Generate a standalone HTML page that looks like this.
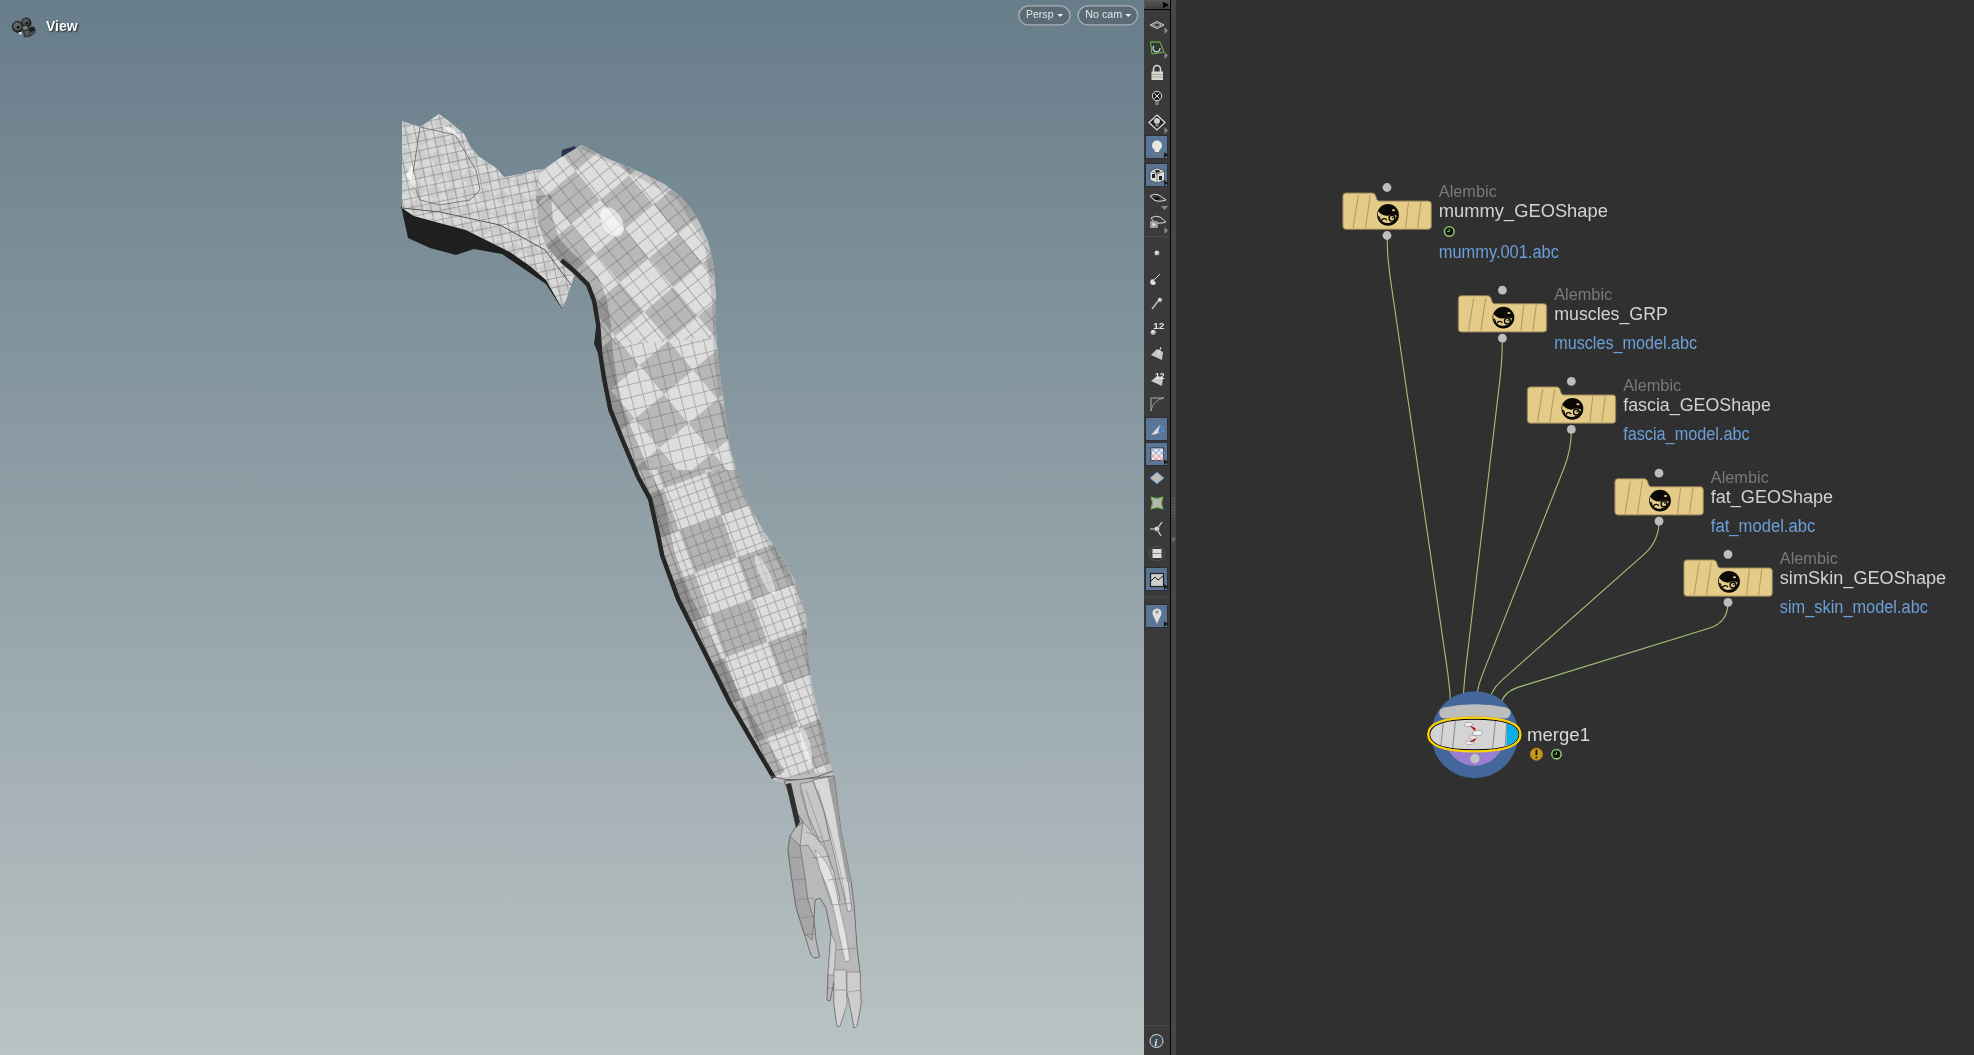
<!DOCTYPE html>
<html><head><meta charset="utf-8">
<style>
html,body{margin:0;padding:0;width:1974px;height:1055px;overflow:hidden;background:#2f2f2f;font-family:"Liberation Sans",sans-serif}
#vp{position:absolute;left:0;top:0;width:1144px;height:1055px;background:linear-gradient(to bottom,rgb(103,125,138) 0%,rgb(186,195,196) 100%);overflow:hidden}
#tb{position:absolute;left:1144px;top:0;width:26px;height:1055px;background:#3a3a3a}
#sep{position:absolute;left:1170px;top:0;width:1px;height:1055px;background:#000}
#strip{position:absolute;left:1171px;top:0;width:5px;height:1055px;background:#474747}
#ng{position:absolute;left:1176px;top:0;width:798px;height:1055px;background:#303030}
svg{position:absolute;left:0;top:0;overflow:visible;will-change:transform}
.view{will-change:transform;position:absolute;left:46px;top:18px;font-size:14px;line-height:16px;font-weight:bold;color:#fafafa;text-shadow:1px 1px 1.5px rgba(0,0,0,0.75)}
.pill{position:absolute;top:5px;height:19px;border:1px solid #a9b3b8;border-radius:10px;background:#5a6f7b;color:#e8e8e8;font-size:11px;line-height:19px;box-sizing:border-box}
</style></head><body>
<div id="vp">
  <svg id="arm" width="1144" height="1055" viewBox="0 0 1144 1055">
    <defs>
      <pattern id="gridA" width="12" height="12.5" patternUnits="userSpaceOnUse" patternTransform="rotate(-14)">
        <path d="M0 0.4H12M0.4 0V12.5" stroke="#505050" stroke-width="0.7" fill="none"/>
      </pattern>
      <pattern id="gridB" width="13" height="13" patternUnits="userSpaceOnUse" patternTransform="rotate(-38)">
        <path d="M0 0.4H13M0.4 0V13" stroke="#505050" stroke-width="0.7" fill="none"/>
      </pattern>
      <pattern id="gridF" width="9" height="10" patternUnits="userSpaceOnUse" patternTransform="rotate(-20)">
        <path d="M0 0.4H9M0.4 0V10" stroke="#505050" stroke-width="0.7" fill="none"/>
      </pattern>
      <pattern id="gridS" width="9" height="9" patternUnits="userSpaceOnUse" patternTransform="rotate(-12)">
        <path d="M0 0.4H9M0.4 0V9" stroke="#5a5a5a" stroke-width="0.6" fill="none"/>
      </pattern>
      <pattern id="chkA" width="90" height="90" patternUnits="userSpaceOnUse" patternTransform="translate(10 8) rotate(-20)">
        <rect width="90" height="90" fill="#dcdcdc"/>
        <rect width="45" height="45" fill="#b3b3b3"/>
        <rect x="45" y="45" width="45" height="45" fill="#b3b3b3"/>
      </pattern>
      <pattern id="stripes" width="76" height="76" patternUnits="userSpaceOnUse" patternTransform="translate(600 200) rotate(-40)">
        <rect width="76" height="76" fill="#dedede"/>
        <rect width="38" height="38" fill="#b8b8b8"/>
        <rect x="38" y="38" width="38" height="38" fill="#b8b8b8"/>
      </pattern>
      <pattern id="chkS" width="24" height="24" patternUnits="userSpaceOnUse" patternTransform="rotate(-40)">
        <rect width="24" height="24" fill="#d8d8d8"/>
        <rect width="12" height="12" fill="#b8b8b8"/>
        <rect x="12" y="12" width="12" height="12" fill="#b8b8b8"/>
      </pattern>
      <clipPath id="armclip"><path id="armpath" d="M540 172 L560 158 L582 145 L606 158 L626 166 L644 174 L664 184 L680 196 L692 210 L700 224 L708 242 L712 258 L714 270 L716 300 L716 330 L718 360 L722 390 L726 420 L730 450 L740 480 L748 504 L764 532 L784 560 L798 588 L806 616 L808 648 L812 688 L820 720 L828 752 L832 772 L833 780 L812 782 L786 784 L772 779 L756 752 L728 704 L700 648 L676 600 L660 556 L656 536 L648 500 L636 478 L620 440 L608 410 L602 380 L598 354 L594 344 L596 326 L592 302 L586 286 L574 274 L560 262 L546 246 L538 222 L536 196 Z"/></clipPath>
      <clipPath id="shclip"><path d="M402 121 L420 127 L439 114 L450 122 L464 134 L470 146 L478 156 L484 160 L496 168 L504 177 L522 174 L534 170 L548 169 L560 162 L572 176 L578 200 L580 230 L576 270 L566 300 L562 308 L546 280 L530 266 L510 252 L486 240 L466 230 L436 222 L414 216 L402 208 Z"/></clipPath>
      <linearGradient id="hl" x1="0" y1="0" x2="1" y2="0">
        <stop offset="0" stop-color="#fff" stop-opacity="0"/>
        <stop offset="0.5" stop-color="#fff" stop-opacity="0.55"/>
        <stop offset="1" stop-color="#fff" stop-opacity="0"/>
      </linearGradient>
    </defs>
    <!-- shoulder shadow -->
    <path d="M401 206 L408 238 L430 248 L456 255 L474 249 L502 254 L546 284 L562 309 L570 280 L540 244 Z" fill="#1f1f1f"/>
    <path d="M562 150 L575 146 L580 160 L560 168 Z" fill="#2a3150"/>
    <!-- shoulder piece -->
    <g clip-path="url(#shclip)">
      <rect x="395" y="110" width="190" height="200" fill="#dadada"/>
      <rect x="395" y="110" width="190" height="200" fill="url(#chkS)" opacity="0.4"/>
      <rect x="395" y="110" width="190" height="200" fill="url(#gridS)" opacity="0.75"/>
      <path d="M420 127 L455 135 L476 170 L480 190 L470 200 L440 205 L420 200 L412 180 Z" fill="none" stroke="#666" stroke-width="0.8"/>
      <path d="M402 208 L440 212 L500 225 L545 250 L575 290" fill="none" stroke="#555" stroke-width="1"/>
      <path d="M406 175 L412 165 L416 190 Z" fill="#fff" opacity="0.7"/>
      <path d="M440 125 L452 128 L462 140 Z" fill="#fff" opacity="0.6"/>
    </g>
    <!-- collar flap edge -->
    <path d="M538 180 L542 224 L556 244 L574 264 L582 280" fill="none" stroke="#777" stroke-width="1"/>
    <!-- upper arm + sleeve -->
    <g clip-path="url(#armclip)">
      <rect x="530" y="140" width="310" height="650" fill="#d6d6d6"/>
      <rect x="530" y="140" width="310" height="330" fill="url(#stripes)"/>
      <rect x="530" y="470" width="310" height="320" fill="url(#chkA)"/>
      <path d="M530 140 H840 V330 L530 350 Z" fill="url(#gridB)" opacity="0.55"/>
      <path d="M530 350 L840 330 V470 H530 Z" fill="url(#gridA)" opacity="0.55"/>
      <rect x="530" y="470" width="310" height="320" fill="url(#gridF)" opacity="0.55"/>
      <!-- highlights -->
      <ellipse cx="612" cy="222" rx="10" ry="16" fill="#fff" opacity="0.6" transform="rotate(-30 612 222)"/>
      <ellipse cx="765" cy="575" rx="5" ry="22" fill="#fff" opacity="0.45" transform="rotate(-25 765 575)"/>
      <ellipse cx="806" cy="745" rx="4" ry="18" fill="#fff" opacity="0.5" transform="rotate(-15 806 745)"/>
      <!-- left dark rim -->
      <path d="M536 196 L538 222 L546 246 L560 262 L574 274 L586 286 L592 302 L596 326 L598 354 L602 380 L608 410 L620 440 L636 478 L648 500 L656 536 L660 556 L676 600 L700 648 L728 704 L756 752 L772 779" fill="none" stroke="#000" stroke-opacity="0.2" stroke-width="30" stroke-linejoin="round"/>
      <path d="M560 262 L574 274 L586 286 L592 302 L596 326 L598 354 L602 380 L608 410 L620 440 L636 478 L648 500 L656 536 L660 556 L676 600 L700 648 L728 704 L756 752 L772 779" fill="none" stroke="#262626" stroke-width="9" stroke-linejoin="round"/>
      <!-- right edge slight shade -->
      <path d="M582 145 L626 166 L680 196 L708 242 L716 300 L718 360 L726 420 L740 480 L764 532 L798 588 L808 648 L820 720 L832 772" fill="none" stroke="#000" stroke-opacity="0.12" stroke-width="8"/>
      <!-- sleeve bottom band -->
      <path d="M772 779 L833 771 L834 790 L772 795 Z" fill="#bdbdbd"/>
    </g>
    <path d="M770 776 Q800 786 833 771" fill="none" stroke="#666" stroke-width="1"/>
    <!-- hand -->
    <g stroke-linejoin="round">
      <path d="M784 781 L797 813 L803 822 L795 828 L790 836 L788 850 L790 866 L792 880 L796 907 L804 933 L811 955 L814 958 L819.5 957 L816 940 L814 920 L815 900 L820 898 L826 908 L831 933 L828 975 L827 1000 L830 1001 L834 982 L834 1004 L837 1026 L840 1026 L846 1004 L847 990 L851 1011 L854 1028 L857 1026 L861 1004 L860 972 L857 947 L854 904 L851 881 L846 856 L841 832 L834 776 Z" fill="#b9b9b9" stroke="#5a5a5a" stroke-width="0.8"/>
      <path d="M791 783 L800 822 L796 828 L786 784 Z" fill="#2e2e2e"/>
      <path d="M813 780 L828 777 L836 815 L842 850 L848 880 L852 910 L848 912 L840 880 L832 845 L824 812 Z" fill="#d8d8d8" stroke="#666" stroke-width="0.6"/>
      <path d="M828 778 L834 777 L841 832 L846 856 L851 881 L847 882 L841 850 L835 815 Z" fill="#9e9e9e"/>
      <path d="M800 784 L813 781 L824 812 L830 840 L820 842 L808 815 Z" fill="#c6c6c6" stroke="#666" stroke-width="0.6"/>
      <path d="M803 822 L815 836 L826 850 L834 872 L840 900 L832 905 L825 885 L818 862 L808 845 L800 846 Z" fill="#c9c9c9" stroke="#666" stroke-width="0.6"/>
      <path d="M790 836 L800 846 L804 870 L808 900 L814 920 L812 940 L804 933 L796 907 L792 880 L788 850 Z" fill="#a6a6a6" stroke="#5a5a5a" stroke-width="0.6"/>
      <path d="M815 850 Q832 862 838 900 L846 935 L850 960 L845 962 L838 930 Q832 895 820 870 Z" fill="#e2e2e2" stroke="#777" stroke-width="0.5"/>
      <path d="M831 933 L836 944 L834 975 L828 975 Z" fill="#cfcfcf" stroke="#666" stroke-width="0.5"/>
      <path d="M834 970 L846 970 L847 1004 L840 1026 L837 1026 L834 1004 Z" fill="#d2d2d2" stroke="#666" stroke-width="0.5"/>
      <path d="M847 972 L860 972 L861 1004 L857 1026 L854 1028 L851 1011 L847 992 Z" fill="#cdcdcd" stroke="#666" stroke-width="0.5"/>
      <path d="M796 900 L814 898 M799 918 L815 916 M804 935 L816 934 M790 858 L802 857 M792 880 L806 879 M806 832 L822 838 M812 858 L830 856 M828 880 L846 878 M833 905 L852 903 M836 950 L857 948 M834 990 L846 990 M848 992 L861 990 M828 988 L834 988" fill="none" stroke="#777" stroke-width="0.5"/>
      <path d="M800 790 L812 830 M806 790 L820 830 L832 870 M818 790 L830 830 L840 870 L846 900" fill="none" stroke="#7a7a7a" stroke-width="0.5"/>
    </g>
  </svg>
  <svg width="40" height="40" style="left:0px;top:0px" viewBox="0 0 40 40">
    <defs><radialGradient id="reel" cx="0.4" cy="0.35" r="0.7"><stop offset="0" stop-color="#6a6a6a"/><stop offset="1" stop-color="#1e1e1e"/></radialGradient></defs>
    <g transform="translate(0.8 0.8)" opacity="0.35"><circle cx="17.6" cy="26.7" r="5.6" fill="#000"/><circle cx="26.1" cy="22.5" r="4.9" fill="#000"/><path d="M21 27 L30 25 L35 28 L35 32 L30 36 L23 36 Z" fill="#000"/></g>
    <circle cx="17.6" cy="26.7" r="5.4" fill="url(#reel)" stroke="#151515" stroke-width="0.8"/>
    <circle cx="17.6" cy="26.7" r="3" fill="none" stroke="#707a80" stroke-width="0.8"/>
    <circle cx="18.2" cy="27.1" r="1.2" fill="#0c0c0c"/>
    <circle cx="26.1" cy="22.5" r="4.6" fill="url(#reel)" stroke="#151515" stroke-width="0.8"/>
    <circle cx="26.6" cy="22.9" r="1.1" fill="#0c0c0c"/>
    <path d="M22 26.5 L27 25.3 L28.3 29.5 L23.2 30.8 Z" fill="#7a7a7a" stroke="#222" stroke-width="0.6"/>
    <path d="M23.5 31 L29.5 29.5 L30.5 35.5 L25 37 Z" fill="#555" stroke="#1a1a1a" stroke-width="0.7"/>
    <path d="M29 28 L34 26.5 L35 31 L30.5 32 Z" fill="#1c1c1c"/>
    <rect x="19" y="32" width="2.5" height="2.5" fill="#ddd"/>
  </svg>
  <div class="view">View</div>
  <svg width="130" height="30" viewBox="1010 0 130 30" style="left:1010px;top:0">
    <rect x="1018.9" y="5.9" width="51" height="19" rx="9.5" fill="#5a6b75" stroke="#a9b1b5" stroke-width="1.3"/>
    <rect x="1078.1" y="5.9" width="59.5" height="19" rx="9.5" fill="#5a6b75" stroke="#a9b1b5" stroke-width="1.3"/>
    <text x="1026" y="18.2" font-size="11" fill="#e6e6e6" textLength="27.5" lengthAdjust="spacingAndGlyphs">Persp</text>
    <text x="1085.2" y="18.2" font-size="11" fill="#e6e6e6" textLength="37" lengthAdjust="spacingAndGlyphs">No cam</text>
    <path d="M1057.2 14 H1063.2 L1060.2 17 Z" fill="#eee"/>
    <path d="M1125.3 14 H1131.3 L1128.3 17 Z" fill="#eee"/>
  </svg>
</div>
<div id="tb"></div>
<div id="sep"></div>
<div id="strip"></div>
<svg id="tbsvg" width="40" height="1055" viewBox="1144 0 40 1055" style="left:1144px;top:0">
  <defs>
    <linearGradient id="btn" x1="0" y1="0" x2="0" y2="1"><stop offset="0" stop-color="#545454"/><stop offset="1" stop-color="#3c3c3c"/></linearGradient>
    <radialGradient id="ball" cx="0.35" cy="0.35" r="0.7"><stop offset="0" stop-color="#f4f4f4"/><stop offset="1" stop-color="#9a9a9a"/></radialGradient>
  </defs>
  <!-- top button -->
  <rect x="1144.5" y="0.5" width="25" height="9" fill="url(#btn)" stroke="#5a5a5a" stroke-width="1"/>
  <rect x="1144" y="9" width="26" height="1" fill="#050505"/>
  <path d="M1163 2 L1169 5 L1163 8 Z" fill="#000"/>
  <g fill="none" stroke="#d8d8d8" stroke-width="1">
    <!-- 1 layers -->
    <path d="M1150 25 L1157 21.5 L1164 25 L1157 28.5 Z"/>
    <path d="M1152.5 25 L1157 23 L1161.5 25 L1157 27 Z" stroke="#9aa"/>
  </g>
  <g fill="#8a8a8a">
    <path d="M1164.5 27 L1168 30.5 L1164.5 34 Z"/>
    <path d="M1164.5 52 L1168 55.5 L1164.5 59 Z"/>
    <path d="M1164.5 127 L1168 130.5 L1164.5 134 Z"/>
    <path d="M1164.5 227 L1168 230.5 L1164.5 234 Z"/>
    <path d="M1161 206 L1168 206 L1164.5 210 Z"/>
  </g>
  <!-- 2 green quad -->
  <path d="M1150.5 42 L1160 42 L1164 52 L1152 54 Z" fill="#2e3a35" stroke="#7cc04a" stroke-width="1"/>
  <path d="M1154 46 A3.5 3.5 0 1 0 1160 48" fill="none" stroke="#ddd" stroke-width="1.2"/>
  <!-- 3 lock -->
  <path d="M1153.5 72 V69 A3.5 3.5 0 0 1 1160.5 69 V72" fill="none" stroke="#d8d8d0" stroke-width="1.6"/>
  <rect x="1151.5" y="71.5" width="11.5" height="8.5" fill="#d9d9d0"/>
  <path d="M1151.5 74.5 H1163 M1151.5 77 H1163" stroke="#9a9a90" stroke-width="0.8"/>
  <!-- 4 bulb x -->
  <circle cx="1157" cy="96" r="4.7" fill="#222" stroke="#ddd" stroke-width="1"/>
  <path d="M1154.5 93.5 L1159.5 98.5 M1159.5 93.5 L1154.5 98.5" stroke="#ddd" stroke-width="1"/>
  <path d="M1155 101 H1159 V105 H1155 Z" fill="#777"/>
  <!-- 5 diamond bulb -->
  <path d="M1157 115 L1165 122.5 L1157 130 L1149 122.5 Z" fill="#222" stroke="#ddd" stroke-width="1.2"/>
  <circle cx="1157" cy="121" r="3" fill="#ccc"/>
  <rect x="1155.5" y="123.5" width="3" height="3" fill="#888"/>
  <!-- highlight boxes -->
  <g fill="#5b7594" stroke="#2c2f33" stroke-width="1">
    <rect x="1145.5" y="135.5" width="22" height="23"/>
    <rect x="1145.5" y="163.5" width="22" height="23"/>
    <rect x="1145.5" y="417.5" width="22" height="23"/>
    <rect x="1145.5" y="442.5" width="22" height="23"/>
    <rect x="1145.5" y="567.5" width="22" height="23"/>
    <rect x="1145.5" y="604.5" width="22" height="23"/>
  </g>
  <g fill="#1a1a1a">
    <path d="M1164 152 L1168 155 L1164 158 Z"/>
    <path d="M1164 180 L1168 183 L1164 186 Z"/>
    <path d="M1164 459 L1168 462 L1164 465 Z"/>
    <path d="M1164 584 L1168 587 L1164 590 Z"/>
    <path d="M1164 621 L1168 624 L1164 627 Z"/>
  </g>
  <!-- bulb -->
  <circle cx="1157" cy="145.5" r="5" fill="#e8e8e0"/>
  <path d="M1154 148 L1160 148 L1159 152 L1155 152 Z" fill="#e8e8e0"/>
  <circle cx="1157" cy="154" r="2" fill="#777"/>
  <!-- cube -->
  <path d="M1150 171 L1157 168 L1164.5 171 L1164.5 180 L1157 183 L1150 180 Z" fill="#ddd" stroke="#333" stroke-width="0.6"/>
  <path d="M1150 171 L1157 174 L1164.5 171 M1157 174 V183" stroke="#333" stroke-width="0.6" fill="none"/>
  <rect x="1152" y="174" width="3" height="4" fill="#222"/>
  <rect x="1159" y="176" width="3" height="4" fill="#222"/>
  <path d="M1155 170 L1159 170 L1160 172 L1156 173 Z" fill="#222"/>
  <!-- glasses -->
  <path d="M1150 196 Q1154 193 1159 195 Q1163 198 1166 200 L1162 201 Q1158 202 1154 200 Z" fill="none" stroke="#ddd" stroke-width="1"/>
  <ellipse cx="1157" cy="198.5" rx="2.5" ry="1.5" fill="#111"/>
  <path d="M1151 218 Q1155 215 1160 217 Q1164 220 1166 222 L1162 223 Q1158 224 1154 222 Z" fill="none" stroke="#ddd" stroke-width="1"/>
  <rect x="1150" y="221" width="8" height="7" rx="1" fill="#999"/>
  <path d="M1152.5 222 L1156 224.5 L1152.5 227 Z" fill="#ddd"/>
  <rect x="1144" y="236" width="26" height="1" fill="#4a4a4a"/>
  <!-- dot -->
  <circle cx="1157" cy="253" r="2.5" fill="url(#ball)"/>
  <!-- brush -->
  <path d="M1160 274 L1154 280" stroke="#ccc" stroke-width="1"/>
  <path d="M1153 279 A3 3 0 1 0 1156 283 Z" fill="#ddd"/>
  <!-- pin -->
  <path d="M1152 309 L1159 300" stroke="#bbb" stroke-width="1.5"/>
  <circle cx="1160" cy="300" r="2.2" fill="url(#ball)"/>
  <!-- 12 dot -->
  <circle cx="1153.3" cy="332.3" r="2.6" fill="url(#ball)"/>
  <text x="1153.2" y="329.4" font-family="Liberation Sans" font-size="9.5" font-weight="bold" fill="#e4e4e4" textLength="11" lengthAdjust="spacingAndGlyphs">12</text>
  <!-- plane stick -->
  <path d="M1151 355 L1157 349 L1163 352 L1162 360 Z" fill="#c8c8c8"/>
  <path d="M1158 355 L1161 347" stroke="#eee" stroke-width="1"/>
  <!-- plane 12 -->
  <path d="M1151 381 L1157 376 L1163 377 L1162 386 Z" fill="#c8c8c8"/>
  <text x="1155" y="378.8" font-family="Liberation Sans" font-size="9.5" font-weight="bold" fill="#e8e8e8" textLength="9.5" lengthAdjust="spacingAndGlyphs">12</text>
  <!-- curve corner -->
  <path d="M1151 411 V398 H1164" fill="none" stroke="#ccc" stroke-width="0.8"/>
  <path d="M1151 411 Q1153 400 1164 398" fill="none" stroke="#aaa" stroke-width="0.8"/>
  <!-- polygon -->
  <path d="M1151 435 L1160 425 L1164 431 L1156 434 Z" fill="#ddd"/>
  <path d="M1158 433 L1160 425 L1164 431 Z" fill="#3d7ac8"/>
  <!-- checker -->
  <rect x="1151" y="448" width="12.5" height="12.5" fill="#eee" stroke="#222" stroke-width="0.8"/>
  <g fill="#9ab8e0"><rect x="1151.5" y="448.5" width="3" height="3"/><rect x="1157.5" y="448.5" width="3" height="3"/><rect x="1154.5" y="451.5" width="3" height="3"/><rect x="1160.5" y="451.5" width="3" height="3"/></g>
  <g fill="#e4a8b0"><rect x="1151.5" y="454.5" width="3" height="3"/><rect x="1157.5" y="454.5" width="3" height="3"/><rect x="1154.5" y="457.5" width="3" height="3"/><rect x="1160.5" y="457.5" width="3" height="3"/></g>
  <!-- diamond blue -->
  <path d="M1157 472 L1164 478 L1157 484 L1150 478 Z" fill="#bdbdb0" stroke="#4a88d8" stroke-width="1"/>
  <!-- green x -->
  <path d="M1151 497 Q1157 500 1163 497 Q1160 503 1163 509 Q1157 506 1151 509 Q1154 503 1151 497 Z" fill="#b5b5b5" stroke="#5cbf3a" stroke-width="1"/>
  <!-- triad -->
  <path d="M1157 529 L1162 522 M1157 529 L1150 529 M1157 529 L1161 536" stroke="#ddd" stroke-width="1.2"/>
  <circle cx="1157" cy="529" r="2.5" fill="url(#ball)"/>
  <!-- circle lines -->
  <circle cx="1157" cy="553.5" r="7.5" fill="none" stroke="#555" stroke-width="1"/>
  <rect x="1152.5" y="549" width="9" height="9" fill="#ddd"/>
  <path d="M1152.5 553.5 H1161.5" stroke="#888" stroke-width="1"/>
  <!-- landscape -->
  <rect x="1150.5" y="573.5" width="13" height="13" fill="#ccc" stroke="#222" stroke-width="1.2"/>
  <path d="M1151 581 L1155 577 L1158 580 L1163 576" fill="none" stroke="#222" stroke-width="1"/>
  <rect x="1144" y="596.5" width="26" height="1" fill="#4a4a4a"/>
  <!-- pin map -->
  <path d="M1157 624 L1153 615 A4.5 4.5 0 1 1 1161 615 Z" fill="#e0e0e0"/>
  <circle cx="1157" cy="612" r="1.8" fill="#999"/>
  <!-- bottom -->
  <rect x="1144" y="1025" width="26" height="1" fill="#4a4a4a"/>
  <circle cx="1156.5" cy="1041" r="6.5" fill="#3d4a52" stroke="#ddd" stroke-width="1"/>
  <text x="1154.5" y="1045.5" font-family="Liberation Serif" font-style="italic" font-weight="bold" font-size="10" fill="#eee">i</text>
  <!-- strip grip -->
  <g fill="#6a6a6a">
    <rect x="1172" y="498" width="1" height="1"/><rect x="1174" y="498" width="1" height="1"/>
    <rect x="1172" y="501" width="1" height="1"/><rect x="1174" y="501" width="1" height="1"/>
    <rect x="1172" y="504" width="1" height="1"/><rect x="1174" y="504" width="1" height="1"/>
    <rect x="1172" y="507" width="1" height="1"/><rect x="1174" y="507" width="1" height="1"/>
    <rect x="1172" y="510" width="1" height="1"/><rect x="1174" y="510" width="1" height="1"/>
    <rect x="1172" y="513" width="1" height="1"/><rect x="1174" y="513" width="1" height="1"/>
    <rect x="1172" y="516" width="1" height="1"/><rect x="1174" y="516" width="1" height="1"/>
  </g>
  <path d="M1172.5 537 L1175.5 539.5 L1172.5 542 Z" fill="#777"/>
</svg>
<div id="ng">
  <svg id="graph" width="798" height="1055" viewBox="1176 0 798 1055" style="left:0;top:0">
<path d="M1387.0 235.5 Q1387.0 255.5 1389.9 275.3 L1447.8 673.2 Q1450.7 693.0 1450.7 713.0" fill="none" stroke="#a3c278" stroke-width="1.1"/>
<path d="M1502.4 338.2 Q1502.4 358.2 1500.1 378.1 L1465.2 673.1 Q1462.9 693.0 1462.9 713.0" fill="none" stroke="#a3c278" stroke-width="1.1"/>
<path d="M1571.4 429.4 Q1571.4 449.4 1564.0 468.0 L1482.5 674.4 Q1475.1 693.0 1475.1 713.0" fill="none" stroke="#a3c278" stroke-width="1.1"/>
<path d="M1659.0 521.2 Q1659.0 541.2 1644.0 554.4 L1502.3 679.8 Q1487.3 693.0 1487.3 713.0" fill="none" stroke="#a3c278" stroke-width="1.1"/>
<path d="M1728.0 602.4 Q1728.0 622.4 1708.9 628.3 L1518.6 687.1 Q1499.5 693.0 1499.5 713.0" fill="none" stroke="#a3c278" stroke-width="1.1"/>
<path d="M1345.9 193.0 H1372.4 Q1374.4 193.0 1375.5 195.2 L1376.9 199.5 Q1377.9 201.0 1379.9 201.0 H1428.3 Q1431.3 201.0 1431.3 204.0 V226.3 Q1431.3 229.3 1428.3 229.3 H1345.9 Q1342.9 229.3 1342.9 226.3 V196.0 Q1342.9 193.0 1345.9 193.0 Z" fill="#e5cb88" stroke="#8f7d55" stroke-width="1"/>
<path d="M1358.3 195.2 L1353.1 228.0" stroke="#a8925e" stroke-width="0.9"/>
<path d="M1370.3 195.2 L1365.4 228.0" stroke="#a8925e" stroke-width="0.9"/>
<path d="M1408.5 202.2 L1405.5 228.0" stroke="#a8925e" stroke-width="0.9"/>
<path d="M1420.9 202.2 L1417.5 228.0" stroke="#a8925e" stroke-width="0.9"/>
<circle cx="1388.0" cy="214.9" r="10.9" fill="#0a0905"/>
<path d="M1378.00 211.20 Q1383.00 216.40 1388.00 215.70 Q1392.00 213.70 1396.80 215.70 A9.6 9.6 0 0 1 1378.00 211.20 Z" fill="#e5cb88"/>
<circle cx="1392.00" cy="218.20" r="2.9" fill="none" stroke="#0a0905" stroke-width="1.4"/>
<path d="M1392.00 218.20 L1393.50 216.90" stroke="#0a0905" stroke-width="1.2"/>
<path d="M1381.50 221.40 A2.8 2.8 0 0 1 1386.80 220.20" fill="none" stroke="#0a0905" stroke-width="1.3"/>
<path d="M1378.40 216.40 Q1380.50 217.40 1380.00 221.40" fill="none" stroke="#0a0905" stroke-width="1.1"/>
<ellipse cx="1393.50" cy="210.30" rx="1.6" ry="1.0" fill="#e5cb88"/>
<circle cx="1387.0" cy="187.5" r="4.4" fill="#bdbdbd"/>
<circle cx="1387.0" cy="235.5" r="4.4" fill="#bdbdbd"/>
<text x="1438.8" y="197.4" font-size="16.6" fill="#797979" textLength="58" lengthAdjust="spacingAndGlyphs">Alembic</text>
<text x="1438.8" y="217.0" font-size="18.3" fill="#d2d2d2" textLength="169.1" lengthAdjust="spacingAndGlyphs">mummy_GEOShape</text>
<text x="1438.8" y="257.8" font-size="18" fill="#6c9fd8" textLength="120.1" lengthAdjust="spacingAndGlyphs">mummy.001.abc</text>
<circle cx="1449.3" cy="231.5" r="4.8" fill="#111" stroke="#86c06a" stroke-width="1.6"/>
<path d="M1449.3 229.0 V231.5 H1447.3" stroke="#86c06a" stroke-width="1" fill="none"/>
<path d="M1461.3 295.7 H1487.8 Q1489.8 295.7 1490.9 297.9 L1492.3 302.2 Q1493.3 303.7 1495.3 303.7 H1543.7 Q1546.7 303.7 1546.7 306.7 V329.0 Q1546.7 332.0 1543.7 332.0 H1461.3 Q1458.3 332.0 1458.3 329.0 V298.7 Q1458.3 295.7 1461.3 295.7 Z" fill="#e5cb88" stroke="#8f7d55" stroke-width="1"/>
<path d="M1473.7 297.9 L1468.5 330.7" stroke="#a8925e" stroke-width="0.9"/>
<path d="M1485.7 297.9 L1480.8 330.7" stroke="#a8925e" stroke-width="0.9"/>
<path d="M1523.9 304.9 L1520.9 330.7" stroke="#a8925e" stroke-width="0.9"/>
<path d="M1536.3 304.9 L1532.9 330.7" stroke="#a8925e" stroke-width="0.9"/>
<circle cx="1503.4" cy="317.6" r="10.9" fill="#0a0905"/>
<path d="M1493.40 313.90 Q1498.40 319.10 1503.40 318.40 Q1507.40 316.40 1512.20 318.40 A9.6 9.6 0 0 1 1493.40 313.90 Z" fill="#e5cb88"/>
<circle cx="1507.40" cy="320.90" r="2.9" fill="none" stroke="#0a0905" stroke-width="1.4"/>
<path d="M1507.40 320.90 L1508.90 319.60" stroke="#0a0905" stroke-width="1.2"/>
<path d="M1496.90 324.10 A2.8 2.8 0 0 1 1502.20 322.90" fill="none" stroke="#0a0905" stroke-width="1.3"/>
<path d="M1493.80 319.10 Q1495.90 320.10 1495.40 324.10" fill="none" stroke="#0a0905" stroke-width="1.1"/>
<ellipse cx="1508.90" cy="313.00" rx="1.6" ry="1.0" fill="#e5cb88"/>
<circle cx="1502.4" cy="290.2" r="4.4" fill="#bdbdbd"/>
<circle cx="1502.4" cy="338.2" r="4.4" fill="#bdbdbd"/>
<text x="1554.2" y="300.1" font-size="16.6" fill="#797979" textLength="58" lengthAdjust="spacingAndGlyphs">Alembic</text>
<text x="1554.2" y="319.7" font-size="18.3" fill="#d2d2d2" textLength="113.7" lengthAdjust="spacingAndGlyphs">muscles_GRP</text>
<text x="1554.2" y="348.8" font-size="18" fill="#6c9fd8" textLength="142.9" lengthAdjust="spacingAndGlyphs">muscles_model.abc</text>
<path d="M1530.3 386.9 H1556.8 Q1558.8 386.9 1559.9 389.1 L1561.3 393.4 Q1562.3 394.9 1564.3 394.9 H1612.7 Q1615.7 394.9 1615.7 397.9 V420.2 Q1615.7 423.2 1612.7 423.2 H1530.3 Q1527.3 423.2 1527.3 420.2 V389.9 Q1527.3 386.9 1530.3 386.9 Z" fill="#e5cb88" stroke="#8f7d55" stroke-width="1"/>
<path d="M1542.7 389.1 L1537.5 421.9" stroke="#a8925e" stroke-width="0.9"/>
<path d="M1554.7 389.1 L1549.8 421.9" stroke="#a8925e" stroke-width="0.9"/>
<path d="M1592.9 396.1 L1589.9 421.9" stroke="#a8925e" stroke-width="0.9"/>
<path d="M1605.3 396.1 L1601.9 421.9" stroke="#a8925e" stroke-width="0.9"/>
<circle cx="1572.4" cy="408.8" r="10.9" fill="#0a0905"/>
<path d="M1562.40 405.10 Q1567.40 410.30 1572.40 409.60 Q1576.40 407.60 1581.20 409.60 A9.6 9.6 0 0 1 1562.40 405.10 Z" fill="#e5cb88"/>
<circle cx="1576.40" cy="412.10" r="2.9" fill="none" stroke="#0a0905" stroke-width="1.4"/>
<path d="M1576.40 412.10 L1577.90 410.80" stroke="#0a0905" stroke-width="1.2"/>
<path d="M1565.90 415.30 A2.8 2.8 0 0 1 1571.20 414.10" fill="none" stroke="#0a0905" stroke-width="1.3"/>
<path d="M1562.80 410.30 Q1564.90 411.30 1564.40 415.30" fill="none" stroke="#0a0905" stroke-width="1.1"/>
<ellipse cx="1577.90" cy="404.20" rx="1.6" ry="1.0" fill="#e5cb88"/>
<circle cx="1571.4" cy="381.4" r="4.4" fill="#bdbdbd"/>
<circle cx="1571.4" cy="429.4" r="4.4" fill="#bdbdbd"/>
<text x="1623.2" y="391.3" font-size="16.6" fill="#797979" textLength="58" lengthAdjust="spacingAndGlyphs">Alembic</text>
<text x="1623.2" y="410.9" font-size="18.3" fill="#d2d2d2" textLength="147.7" lengthAdjust="spacingAndGlyphs">fascia_GEOShape</text>
<text x="1623.2" y="440.0" font-size="18" fill="#6c9fd8" textLength="126.4" lengthAdjust="spacingAndGlyphs">fascia_model.abc</text>
<path d="M1617.9 478.7 H1644.4 Q1646.4 478.7 1647.5 480.9 L1648.9 485.2 Q1649.9 486.7 1651.9 486.7 H1700.3 Q1703.3 486.7 1703.3 489.7 V512.0 Q1703.3 515.0 1700.3 515.0 H1617.9 Q1614.9 515.0 1614.9 512.0 V481.7 Q1614.9 478.7 1617.9 478.7 Z" fill="#e5cb88" stroke="#8f7d55" stroke-width="1"/>
<path d="M1630.3 480.9 L1625.1 513.7" stroke="#a8925e" stroke-width="0.9"/>
<path d="M1642.3 480.9 L1637.4 513.7" stroke="#a8925e" stroke-width="0.9"/>
<path d="M1680.5 487.9 L1677.5 513.7" stroke="#a8925e" stroke-width="0.9"/>
<path d="M1692.9 487.9 L1689.5 513.7" stroke="#a8925e" stroke-width="0.9"/>
<circle cx="1660.0" cy="500.6" r="10.9" fill="#0a0905"/>
<path d="M1650.00 496.90 Q1655.00 502.10 1660.00 501.40 Q1664.00 499.40 1668.80 501.40 A9.6 9.6 0 0 1 1650.00 496.90 Z" fill="#e5cb88"/>
<circle cx="1664.00" cy="503.90" r="2.9" fill="none" stroke="#0a0905" stroke-width="1.4"/>
<path d="M1664.00 503.90 L1665.50 502.60" stroke="#0a0905" stroke-width="1.2"/>
<path d="M1653.50 507.10 A2.8 2.8 0 0 1 1658.80 505.90" fill="none" stroke="#0a0905" stroke-width="1.3"/>
<path d="M1650.40 502.10 Q1652.50 503.10 1652.00 507.10" fill="none" stroke="#0a0905" stroke-width="1.1"/>
<ellipse cx="1665.50" cy="496.00" rx="1.6" ry="1.0" fill="#e5cb88"/>
<circle cx="1659.0" cy="473.2" r="4.4" fill="#bdbdbd"/>
<circle cx="1659.0" cy="521.2" r="4.4" fill="#bdbdbd"/>
<text x="1710.8" y="483.1" font-size="16.6" fill="#797979" textLength="58" lengthAdjust="spacingAndGlyphs">Alembic</text>
<text x="1710.8" y="502.7" font-size="18.3" fill="#d2d2d2" textLength="122.3" lengthAdjust="spacingAndGlyphs">fat_GEOShape</text>
<text x="1710.8" y="531.8" font-size="18" fill="#6c9fd8" textLength="104.5" lengthAdjust="spacingAndGlyphs">fat_model.abc</text>
<path d="M1686.9 559.9 H1713.4 Q1715.4 559.9 1716.5 562.1 L1717.9 566.4 Q1718.9 567.9 1720.9 567.9 H1769.3 Q1772.3 567.9 1772.3 570.9 V593.2 Q1772.3 596.2 1769.3 596.2 H1686.9 Q1683.9 596.2 1683.9 593.2 V562.9 Q1683.9 559.9 1686.9 559.9 Z" fill="#e5cb88" stroke="#8f7d55" stroke-width="1"/>
<path d="M1699.3 562.1 L1694.1 594.9" stroke="#a8925e" stroke-width="0.9"/>
<path d="M1711.3 562.1 L1706.4 594.9" stroke="#a8925e" stroke-width="0.9"/>
<path d="M1749.5 569.1 L1746.5 594.9" stroke="#a8925e" stroke-width="0.9"/>
<path d="M1761.9 569.1 L1758.5 594.9" stroke="#a8925e" stroke-width="0.9"/>
<circle cx="1729.0" cy="581.8" r="10.9" fill="#0a0905"/>
<path d="M1719.00 578.10 Q1724.00 583.30 1729.00 582.60 Q1733.00 580.60 1737.80 582.60 A9.6 9.6 0 0 1 1719.00 578.10 Z" fill="#e5cb88"/>
<circle cx="1733.00" cy="585.10" r="2.9" fill="none" stroke="#0a0905" stroke-width="1.4"/>
<path d="M1733.00 585.10 L1734.50 583.80" stroke="#0a0905" stroke-width="1.2"/>
<path d="M1722.50 588.30 A2.8 2.8 0 0 1 1727.80 587.10" fill="none" stroke="#0a0905" stroke-width="1.3"/>
<path d="M1719.40 583.30 Q1721.50 584.30 1721.00 588.30" fill="none" stroke="#0a0905" stroke-width="1.1"/>
<ellipse cx="1734.50" cy="577.20" rx="1.6" ry="1.0" fill="#e5cb88"/>
<circle cx="1728.0" cy="554.4" r="4.4" fill="#bdbdbd"/>
<circle cx="1728.0" cy="602.4" r="4.4" fill="#bdbdbd"/>
<text x="1779.8" y="564.3" font-size="16.6" fill="#797979" textLength="58" lengthAdjust="spacingAndGlyphs">Alembic</text>
<text x="1779.8" y="583.9" font-size="18.3" fill="#d2d2d2" textLength="166.4" lengthAdjust="spacingAndGlyphs">simSkin_GEOShape</text>
<text x="1779.8" y="613.0" font-size="18" fill="#6c9fd8" textLength="148.1" lengthAdjust="spacingAndGlyphs">sim_skin_model.abc</text>
<circle cx="1474.7" cy="734.7" r="43.5" fill="#43679b"/>
<circle cx="1474.7" cy="735.7" r="30" fill="#9a7ed2"/>
<path d="M1444 707.5 Q1475 701 1506 707.5 Q1511 709 1510.6 713 Q1510 718.5 1504 718.6 Q1475 714 1446 718.6 Q1439.5 718.5 1439.2 713 Q1439.5 708.5 1444 707.5 Z" fill="#bdbdbd"/>
<path d="M1429.75 734.50 C1429.75 724.34 1444.91 719.10 1474.35 719.10 C1503.79 719.10 1518.95 724.34 1518.95 734.50 C1518.95 744.66 1503.79 749.90 1474.35 749.90 C1444.91 749.90 1429.75 744.66 1429.75 734.50 Z" fill="#d4d4d4" stroke="#000" stroke-width="1.1"/>
<clipPath id="mclip"><path d="M1430.35 734.50 C1430.35 724.73 1445.31 719.70 1474.35 719.70 C1503.39 719.70 1518.35 724.73 1518.35 734.50 C1518.35 744.27 1503.39 749.30 1474.35 749.30 C1445.31 749.30 1430.35 744.27 1430.35 734.50 Z"/></clipPath>
<rect x="1506.5" y="715" width="20" height="40" fill="#08aee8" clip-path="url(#mclip)"/>
<path d="M1443.5 720 L1440.5 749" stroke="#777" stroke-width="0.8" clip-path="url(#mclip)"/>
<path d="M1455.5 720 L1452.5 749" stroke="#777" stroke-width="0.8" clip-path="url(#mclip)"/>
<path d="M1495.5 720 L1492.5 749" stroke="#777" stroke-width="0.8" clip-path="url(#mclip)"/>
<path d="M1507 720 L1505 749" stroke="#777" stroke-width="0.8" clip-path="url(#mclip)"/>
<path d="M1428.25 734.50 C1428.25 723.41 1443.92 717.70 1474.35 717.70 C1504.78 717.70 1520.45 723.41 1520.45 734.50 C1520.45 745.59 1504.78 751.30 1474.35 751.30 C1443.92 751.30 1428.25 745.59 1428.25 734.50 Z" fill="none" stroke="#fdd400" stroke-width="2.3"/>
<g stroke="#8a8a8a" stroke-width="0.6"><ellipse cx="1468.5" cy="724.5" rx="4.2" ry="2.1" fill="#eeeeee"/><ellipse cx="1477.5" cy="733" rx="5" ry="2.6" fill="#eeeeee"/><ellipse cx="1473" cy="737.5" rx="4" ry="1.8" fill="#eeeeee"/><ellipse cx="1469.5" cy="742.8" rx="4.2" ry="1.9" fill="#eeeeee"/><path d="M1470.5 726 L1475.5 728.5 L1474.5 730.5 Z" fill="#c41a1a" stroke="#a01010"/><path d="M1475.5 738.5 L1474.5 741 L1470 742 Z" fill="#c41a1a" stroke="#a01010"/></g>
<circle cx="1474.9" cy="758.7" r="4.6" fill="#c4c4c4"/>
<text x="1527" y="740.6" font-size="19" fill="#d9d9d9" textLength="63" lengthAdjust="spacingAndGlyphs">merge1</text>
<circle cx="1536.4" cy="754.2" r="6.2" fill="#c8961e" stroke="#a87a10" stroke-width="0.8"/>
<path d="M1536.4 749.8 V755" stroke="#111" stroke-width="1.8"/><circle cx="1536.4" cy="757.6" r="1" fill="#111"/>
<circle cx="1556.5" cy="754.2" r="4.7" fill="#111" stroke="#86c06a" stroke-width="1.6"/>
<path d="M1556.5 751.7 V754.2 H1554.5" stroke="#86c06a" stroke-width="1" fill="none"/>
</svg>
</div>
</body></html>
